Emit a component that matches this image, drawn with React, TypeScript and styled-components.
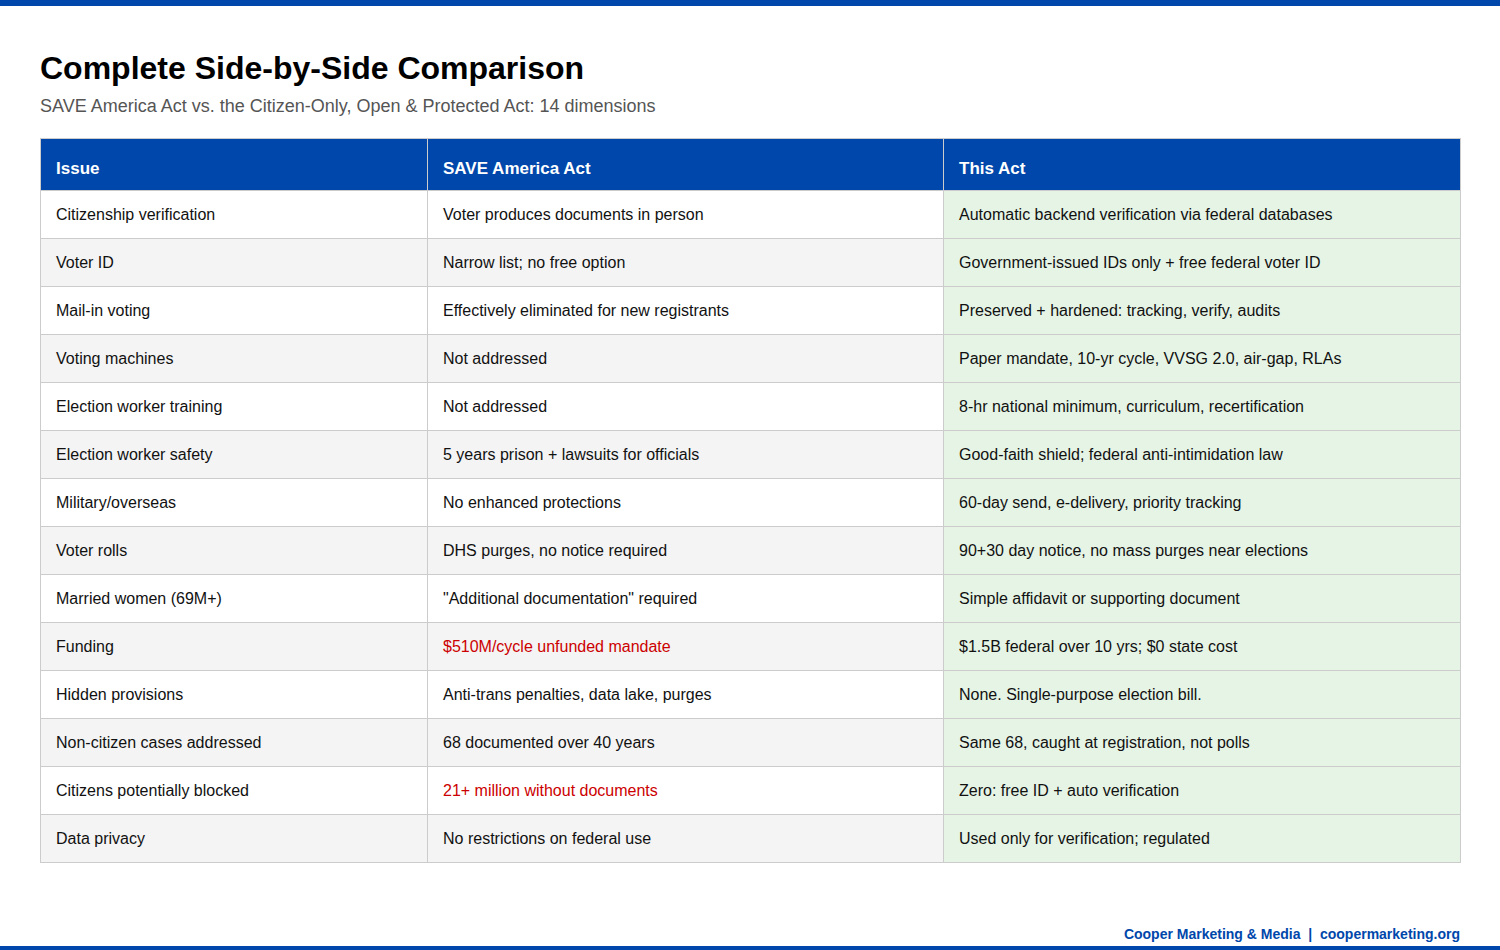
import React from 'react';
import styled, { createGlobalStyle } from 'styled-components';

const blue = '#0047ab';

const GlobalStyle = createGlobalStyle`
  html, body { margin: 0; padding: 0; background: #fff; }
  body { font-family: "Liberation Sans", Arial, sans-serif; color: #111; }
`;

// Page frame
const Page = styled.div`
  box-sizing: border-box;
  height: 950px;
  display: flex;
  flex-direction: column;
  border-top: 6px solid ${blue};
  border-bottom: 4px solid ${blue};
  padding: 0 40px;
`;

const Title = styled.h1`
  margin: 44px 0 0;
  font-size: 32px;
  line-height: 37px;
  font-weight: 700;
  color: #000;
`;

const Subtitle = styled.p`
  margin: 8px 0 0;
  font-size: 18px;
  line-height: 22px;
  color: #555;
`;

// Table
const Table = styled.table`
  margin-top: 21px;
  width: 1420px;
  border-collapse: collapse;
  table-layout: fixed;
  font-size: 16px;
`;

const HeadCell = styled.th<{ $w: number }>`
  width: ${(p) => p.$w}px;
  height: 52px;
  box-sizing: border-box;
  padding: 8px 15px 0;
  background: ${blue};
  color: #fff;
  font-size: 17px;
  font-weight: 700;
  text-align: left;
  border: 1px solid #ccc;
`;

const Row = styled.tr<{ $alt: boolean }>`
  background: ${(p) => (p.$alt ? '#f4f4f4' : '#fff')};
`;

const Cell = styled.td<{ $tone?: 'bad' | 'good' }>`
  height: 48px;
  box-sizing: border-box;
  padding: 0 15px;
  border: 1px solid #ccc;
  color: ${(p) => (p.$tone === 'bad' ? '#cc0000' : '#111')};
  background: ${(p) => (p.$tone === 'good' ? '#e6f4e6' : 'transparent')};
`;

const Footer = styled.div`
  margin-top: auto;
  padding-bottom: 4px;
  text-align: right;
  font-size: 14px;
  font-weight: 700;
  color: ${blue};
  white-space: pre;
`;

type Item = { issue: string; save: string; ours: string; bad?: boolean };

const rows: Item[] = [
  { issue: 'Citizenship verification', save: 'Voter produces documents in person', ours: 'Automatic backend verification via federal databases' },
  { issue: 'Voter ID', save: 'Narrow list; no free option', ours: 'Government-issued IDs only + free federal voter ID' },
  { issue: 'Mail-in voting', save: 'Effectively eliminated for new registrants', ours: 'Preserved + hardened: tracking, verify, audits' },
  { issue: 'Voting machines', save: 'Not addressed', ours: 'Paper mandate, 10-yr cycle, VVSG 2.0, air-gap, RLAs' },
  { issue: 'Election worker training', save: 'Not addressed', ours: '8-hr national minimum, curriculum, recertification' },
  { issue: 'Election worker safety', save: '5 years prison + lawsuits for officials', ours: 'Good-faith shield; federal anti-intimidation law' },
  { issue: 'Military/overseas', save: 'No enhanced protections', ours: '60-day send, e-delivery, priority tracking' },
  { issue: 'Voter rolls', save: 'DHS purges, no notice required', ours: '90+30 day notice, no mass purges near elections' },
  { issue: 'Married women (69M+)', save: '"Additional documentation" required', ours: 'Simple affidavit or supporting document' },
  { issue: 'Funding', save: '$510M/cycle unfunded mandate', ours: '$1.5B federal over 10 yrs; $0 state cost', bad: true },
  { issue: 'Hidden provisions', save: 'Anti-trans penalties, data lake, purges', ours: 'None. Single-purpose election bill.' },
  { issue: 'Non-citizen cases addressed', save: '68 documented over 40 years', ours: 'Same 68, caught at registration, not polls' },
  { issue: 'Citizens potentially blocked', save: '21+ million without documents', ours: 'Zero: free ID + auto verification', bad: true },
  { issue: 'Data privacy', save: 'No restrictions on federal use', ours: 'Used only for verification; regulated' },
];

export default function App() {
  return (
    <>
      <GlobalStyle />
      <Page>
        <Title>Complete Side-by-Side Comparison</Title>
        <Subtitle>SAVE America Act vs. the Citizen-Only, Open &amp; Protected Act: 14 dimensions</Subtitle>
        <Table>
          <thead>
            <tr>
              <HeadCell $w={387}>Issue</HeadCell>
              <HeadCell $w={516}>SAVE America Act</HeadCell>
              <HeadCell $w={517}>This Act</HeadCell>
            </tr>
          </thead>
          <tbody>
            {rows.map((r, i) => (
              <Row key={r.issue} $alt={i % 2 === 1}>
                <Cell>{r.issue}</Cell>
                <Cell $tone={r.bad ? 'bad' : undefined}>{r.save}</Cell>
                <Cell $tone="good">{r.ours}</Cell>
              </Row>
            ))}
          </tbody>
        </Table>
        <Footer>{'Cooper Marketing & Media  |  coopermarketing.org'}</Footer>
      </Page>
    </>
  );
}
